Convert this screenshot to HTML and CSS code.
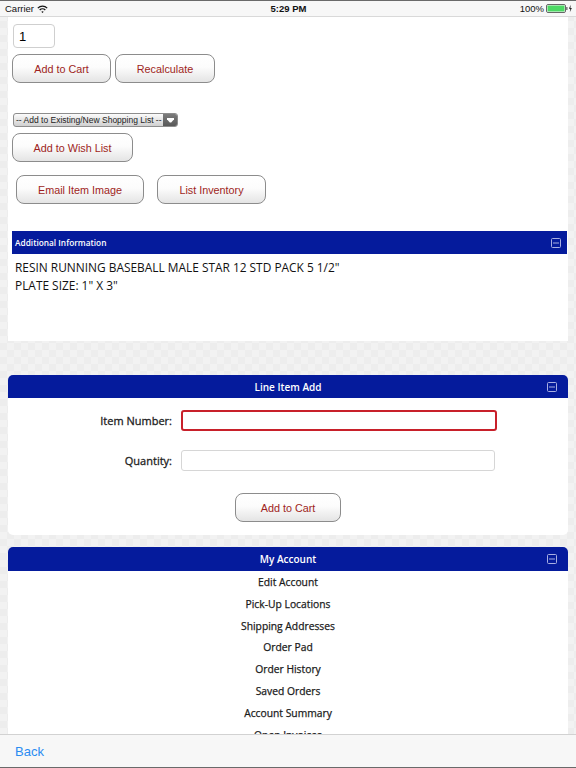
FILE: index.html
```html
<!DOCTYPE html>
<html>
<head>
<meta charset="utf-8">
<title>Item</title>
<link rel="stylesheet" href="styles.css">
</head>
<body>
<header class="status">
  <div class="st-left">Carrier
    <svg class="wifi" width="11" height="8" viewBox="0 0 11 8"><path d="M0.8 3.1 A6.8 6.8 0 0 1 10.2 3.1" fill="none" stroke="#111" stroke-width="1.3"/><path d="M2.7 5 A4 4 0 0 1 8.3 5" fill="none" stroke="#111" stroke-width="1.3"/><path d="M4.3 6.7 L5.5 8 L6.7 6.7 A1.8 1.8 0 0 0 4.3 6.7Z" fill="#111"/></svg>
  </div>
  <div class="st-time">5:29 PM</div>
  <div class="st-right">100%
    <svg width="26" height="9" viewBox="0 0 26 9"><rect x="0.5" y="0.5" width="19" height="8" rx="1.5" fill="none" stroke="#666"/><rect x="1.5" y="1.5" width="17" height="6" rx="0.8" fill="#4cd964"/><rect x="20.2" y="3" width="1.3" height="3" fill="#666"/><path d="M24.6 0.8 L23 4.8 H24.4 L23.8 8.2 L25.8 3.9 H24.4 Z" fill="#111"/></svg>
  </div>
</header>

<main class="page">
  <section class="panel item">
    <input class="qty" type="text" value="1">
    <div class="row r1">
      <button class="btn b-cart">Add to Cart</button>
      <button class="btn b-recalc">Recalculate</button>
    </div>
    <div class="select">
      <span class="sel-txt">-- Add to Existing/New Shopping List --</span>
      <span class="sel-arrow"><svg width="7" height="5" viewBox="0 0 7 5"><path d="M0 0 H7 V1.2 L4.2 4.6 H2.8 L0 1.2Z" fill="#fff"/></svg></span>
    </div>
    <button class="btn b-wish">Add to Wish List</button>
    <div class="row r2">
      <button class="btn b-email">Email Item Image</button>
      <button class="btn b-inv">List Inventory</button>
    </div>
    <div class="bar bar-small">
      <span>Additional Information</span>
      <svg class="toggle" width="10" height="10" viewBox="0 0 10 10"><rect x="0.5" y="0.5" width="9" height="9" rx="1" fill="none" stroke="#a9afe2"/><line x1="2" y1="5" x2="8" y2="5" stroke="#a9afe2"/></svg>
    </div>
    <div class="desc">
      <p>RESIN RUNNING BASEBALL MALE STAR 12 STD PACK 5 1/2"</p>
      <p>PLATE SIZE: 1" X 3"</p>
    </div>
  </section>

  <section class="panel card line-add">
    <div class="bar bar-big">
      <span>Line Item Add</span>
      <svg class="toggle" width="10" height="10" viewBox="0 0 10 10"><rect x="0.5" y="0.5" width="9" height="9" rx="1" fill="none" stroke="#a9afe2"/><line x1="2" y1="5" x2="8" y2="5" stroke="#a9afe2"/></svg>
    </div>
    <div class="form">
      <label>Item Number:</label>
      <input class="field err" type="text">
      <label>Quantity:</label>
      <input class="field ok" type="text">
    </div>
    <button class="btn b-add">Add to Cart</button>
  </section>

  <section class="panel card account">
    <div class="bar bar-big">
      <span>My Account</span>
      <svg class="toggle" width="10" height="10" viewBox="0 0 10 10"><rect x="0.5" y="0.5" width="9" height="9" rx="1" fill="none" stroke="#a9afe2"/><line x1="2" y1="5" x2="8" y2="5" stroke="#a9afe2"/></svg>
    </div>
    <ul class="menu">
      <li>Edit Account</li>
      <li>Pick-Up Locations</li>
      <li>Shipping Addresses</li>
      <li>Order Pad</li>
      <li>Order History</li>
      <li>Saved Orders</li>
      <li>Account Summary</li>
      <li>Open Invoices</li>
    </ul>
  </section>
</main>

<footer class="toolbar">
  <span class="back">Back</span>
</footer>
</body>
</html>
```

FILE: styles.css
```css
* { box-sizing: border-box; }

html, body {
  margin: 0;
  padding: 0;
}

body {
  width: 576px;
  height: 768px;
  overflow: hidden;
  font-family: "Open Sans", "Liberation Sans", sans-serif;
  background-color: #efefef;
  background-image: repeating-conic-gradient(#ededed 0 25%, #f2f2f2 0 50%);
  background-size: 14px 14px;
}

/* status bar */
.status {
  height: 17px;
  background: #f7f7f7;
  border-top: 1px solid #6a6a6a;
  border-bottom: 1px solid #d9d9d9;
  display: grid;
  grid-template-columns: 1fr auto 1fr;
  align-items: center;
  padding: 0 4px 0 5px;
  font-family: "Liberation Sans", Arial, sans-serif;
  font-size: 9.5px;
  color: #111;
}
.st-left { display: flex; align-items: center; gap: 3px; }
.st-time { font-weight: bold; }
.st-right { display: flex; align-items: center; justify-content: flex-end; gap: 2px; }

.page { padding: 0 8px; }

.panel { background: #fff; }

/* item panel */
.item {
  display: flex;
  flex-direction: column;
  align-items: flex-start;
  padding-top: 7px;
}

.qty {
  margin: 0 0 0 5px;
  width: 42px;
  height: 24px;
  border: 1px solid #cfcfcf;
  border-radius: 4px;
  padding: 0 0 0 5px;
  font-family: "Liberation Sans", Arial, sans-serif;
  font-size: 13px;
  color: #000;
  background: #fff;
  outline: none;
}

.row { display: flex; }
.r1 { margin: 6px 0 0 4px; gap: 4px; }
.r2 { margin: 13px 0 0 8px; gap: 13px; }

.btn {
  display: block;
  height: 29px;
  padding: 0;
  border: 1px solid #8c8c8c;
  border-radius: 8px;
  background: linear-gradient(#ffffff 0%, #fcfcfc 45%, #e4e4e4 100%);
  color: #9e1f22;
  font-family: "Liberation Sans", Arial, sans-serif;
  font-size: 10.8px;
  text-align: center;
}
.b-cart { width: 99px; }
.b-recalc { width: 100px; }
.b-wish { width: 121px; margin: 6px 0 0 4px; }
.b-email { width: 128px; }
.b-inv { width: 109px; }

.select {
  margin: 30px 0 0 5px;
  width: 165px;
  height: 14px;
  border: 1px solid #8d8d8d;
  border-radius: 3px;
  background: linear-gradient(#fbfbfb, #d0d0d0);
  display: flex;
  align-items: center;
  overflow: hidden;
  font-family: "Liberation Sans", Arial, sans-serif;
  font-size: 8.5px;
  color: #222;
}
.sel-txt { flex: 1; padding-left: 2px; white-space: nowrap; }
.sel-arrow {
  width: 14px;
  height: 100%;
  background: linear-gradient(#7c7c7c, #585858);
  display: flex;
  align-items: center;
  justify-content: center;
}

/* blue bars */
.bar {
  background: #051b9c;
  color: #fff;
  display: flex;
  align-items: center;
  position: relative;
}
.bar-small {
  align-self: stretch;
  margin: 27px 1px 0 4px;
  height: 23px;
  padding: 0 6px 0 3px;
  justify-content: space-between;
  font-size: 8.3px;
  font-weight: 600;
}
.bar-big {
  height: 23px;
  justify-content: center;
  font-size: 10px;
  font-weight: 600;
  border-radius: 5px 5px 0 0;
}
.bar-big .toggle {
  position: absolute;
  right: 11px;
  top: 7px;
}

.desc {
  padding: 4px 0 47px 7px;
  font-size: 11.9px;
  color: #111;
}
.desc p { margin: 0; line-height: 18px; }

/* cards */
.card { border-radius: 5px; }
.line-add { margin-top: 34px; padding-bottom: 13px; display: flex; flex-direction: column; }

.form {
  display: grid;
  grid-template-columns: 164px 316px;
  column-gap: 9px;
  row-gap: 19px;
  align-items: center;
  padding-top: 12px;
}
.form label {
  text-align: right;
  font-size: 11px;
  font-weight: 400;
  -webkit-text-stroke: 0.3px #222;
  color: #222;
}
.field {
  height: 21px;
  border-radius: 3px;
  background: #fff;
  outline: none;
  padding: 0;
}
.field.err { width: 316px; border: 2px solid #c8202a; }
.field.ok { width: 314px; border: 1px solid #d6d6d6; }

.b-add { width: 106px; margin: 22px auto 0; }

.account { margin-top: 12px; }
.account .bar-big { height: 24px; }

.menu {
  list-style: none;
  margin: 0;
  padding: 0;
}
.menu li {
  height: 21.8px;
  line-height: 22.8px;
  text-align: center;
  font-size: 10.3px;
  font-weight: 400;
  -webkit-text-stroke: 0.25px #1a1a1a;
  color: #1a1a1a;
}

/* bottom toolbar */
.toolbar {
  position: fixed;
  left: 0;
  bottom: 0;
  width: 576px;
  height: 34px;
  background: #f7f7f7;
  border-top: 1px solid #d2d2d2;
  border-bottom: 1px solid #6a6a6a;
  display: flex;
  align-items: center;
  padding-left: 15px;
}
.back {
  font-family: "Liberation Sans", Arial, sans-serif;
  font-size: 13px;
  color: #2a8cf2;
}
```
